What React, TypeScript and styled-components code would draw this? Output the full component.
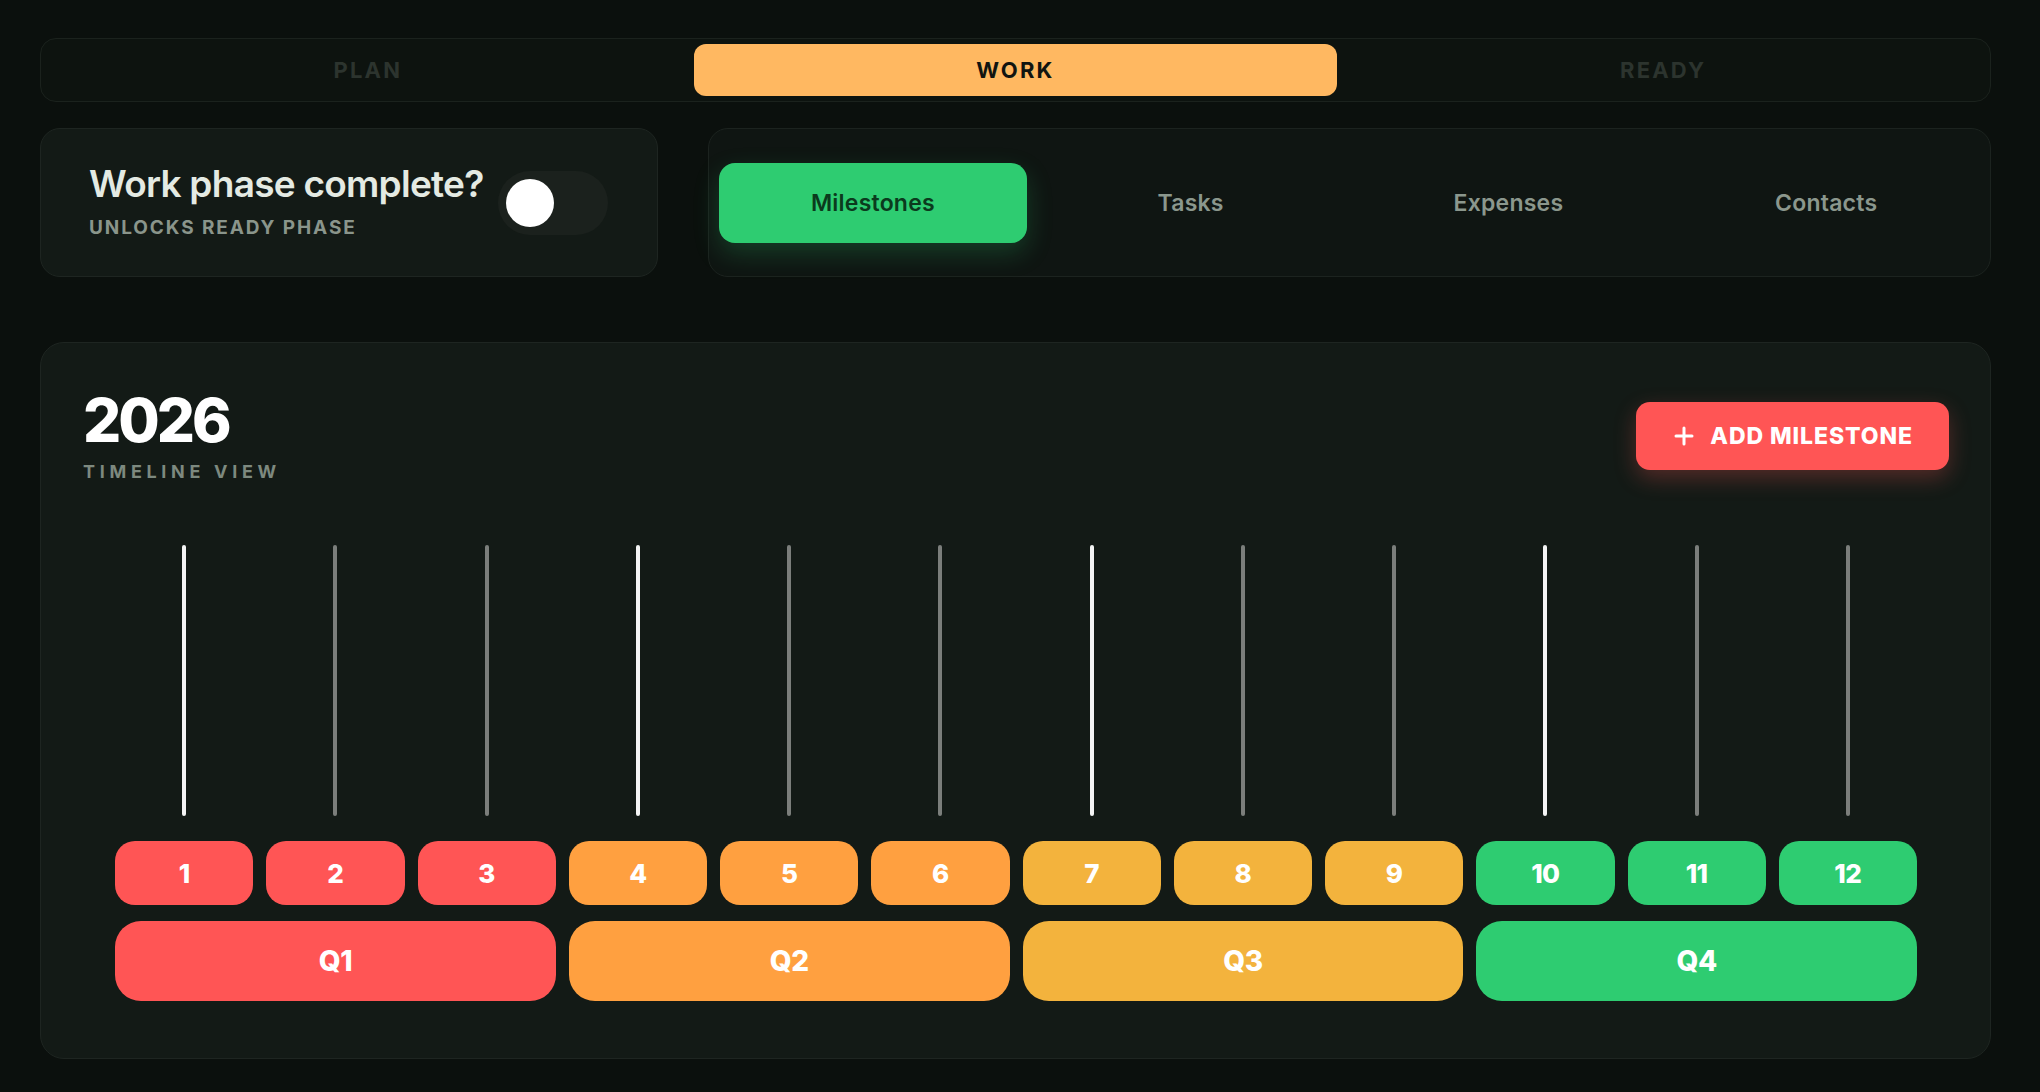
import { useState } from "react";
import styled, { createGlobalStyle } from "styled-components";

const GlobalStyle = createGlobalStyle`
  body {
    margin: 0;
    background: #0b100d;
    font-family: Inter, "Noto Sans", sans-serif;
  }
`;

const Page = styled.div`
  padding: 38px 49px 0 40px;
  box-sizing: border-box;
  min-height: 1092px;
  display: flex;
  flex-direction: column;
`;

// Phase switch
const PhaseBar = styled.div`
  display: grid;
  grid-template-columns: repeat(3, 1fr);
  gap: 4px;
  padding: 5px;
  border: 1px solid #1b221d;
  border-radius: 16px;
  background: #0d130f;
`;

const PhaseTab = styled.button<{ $active?: boolean }>`
  height: 52px;
  border: none;
  border-radius: 12px;
  background: ${(p) => (p.$active ? "#ffb861" : "transparent")};
  color: ${(p) => (p.$active ? "#111410" : "#2c342e")};
  font-family: inherit;
  font-size: 22px;
  font-weight: 700;
  letter-spacing: 0.1em;
  cursor: pointer;
`;

const TopRow = styled.div`
  display: grid;
  grid-template-columns: 618px 1fr;
  gap: 50px;
  margin-top: 26px;
  height: 149px;
`;

const StatusCard = styled.div`
  display: flex;
  align-items: center;
  justify-content: space-between;
  padding: 0 49px 0 48px;
  background: #131a16;
  border: 1px solid #1e2521;
  border-radius: 20px;
`;

const StatusText = styled.div`
  display: flex;
  flex-direction: column;
  gap: 11px;
  margin-top: -2px;
`;

const StatusTitle = styled.div`
  color: #e4eae3;
  font-size: 37px;
  font-weight: 600;
  letter-spacing: -0.02em;
  line-height: 1.1;
`;

const StatusSub = styled.div`
  color: #8a958b;
  font-size: 19px;
  font-weight: 700;
  letter-spacing: 0.1em;
`;

const ToggleTrack = styled.div<{ $on?: boolean }>`
  flex-shrink: 0;
  width: 110px;
  height: 64px;
  border-radius: 32px;
  background: ${(p) => (p.$on ? "#2ecc71" : "#1b211d")};
  padding: 8px;
  box-sizing: border-box;
  display: flex;
  justify-content: ${(p) => (p.$on ? "flex-end" : "flex-start")};
  cursor: pointer;
`;

const ToggleKnob = styled.div`
  width: 48px;
  height: 48px;
  border-radius: 50%;
  background: #ffffff;
`;

const TabsCard = styled.div`
  display: grid;
  grid-template-columns: repeat(4, 1fr);
  gap: 10px;
  align-items: center;
  padding: 0 10px;
  background: #0f1512;
  border: 1px solid #1c231f;
  border-radius: 20px;
`;

const SectionTab = styled.button<{ $active?: boolean }>`
  height: 80px;
  border: none;
  border-radius: 16px;
  background: ${(p) => (p.$active ? "#2ecc71" : "transparent")};
  box-shadow: ${(p) =>
    p.$active ? "0 10px 26px rgba(46, 204, 113, 0.22)" : "none"};
  color: ${(p) => (p.$active ? "#0b3a1d" : "#8b978d")};
  font-family: inherit;
  font-size: 23px;
  font-weight: 600;
  letter-spacing: 0.01em;
  cursor: pointer;
`;

// Timeline
const TimelineCard = styled.div`
  margin-top: 65px;
  padding: 47px 41px 57px 42px;
  background: #131a16;
  border: 1px solid #1e2521;
  border-radius: 24px;
`;

const Header = styled.div`
  display: flex;
  justify-content: space-between;
  align-items: center;
`;

const Year = styled.div`
  color: #ffffff;
  font-size: 60px;
  font-weight: 800;
  line-height: 1;
  letter-spacing: -0.05em;
`;

const YearSub = styled.div`
  margin-top: 13px;
  color: #7d897f;
  font-size: 18px;
  font-weight: 700;
  line-height: 1;
  letter-spacing: 0.26em;
`;

const AddButton = styled.button`
  display: flex;
  align-items: center;
  gap: 16px;
  height: 68px;
  padding: 0 36px 0 38px;
  border: none;
  border-radius: 14px;
  background: #ff5555;
  box-shadow: 0 8px 22px rgba(255, 85, 85, 0.28);
  color: #ffffff;
  font-family: inherit;
  font-size: 23px;
  font-weight: 800;
  letter-spacing: 0.04em;
  cursor: pointer;
`;

const Timeline = styled.div`
  margin-top: 64px;
  padding: 0 32px;
`;

const MonthGrid = styled.div<{ $gapTop?: number }>`
  display: grid;
  grid-template-columns: repeat(12, 1fr);
  column-gap: 13px;
  margin-top: ${(p) => p.$gapTop ?? 0}px;
`;

const TickCell = styled.div`
  height: 271px;
  display: flex;
  justify-content: center;
`;

const Tick = styled.div<{ $major?: boolean }>`
  width: 4px;
  height: 100%;
  border-radius: 2px;
  background: ${(p) => (p.$major ? "#f4f4f4" : "#7b7e7b")};
`;

const MonthPill = styled.div<{ $color: string }>`
  height: 64px;
  border-radius: 20px;
  background: ${(p) => p.$color};
  color: #ffffff;
  font-size: 26px;
  font-weight: 800;
  letter-spacing: -0.02em;
  display: flex;
  align-items: center;
  justify-content: center;
`;

const QuarterPill = styled.div<{ $color: string }>`
  grid-column: span 3;
  height: 80px;
  border-radius: 26px;
  background: ${(p) => p.$color};
  color: #ffffff;
  font-size: 28px;
  font-weight: 800;
  letter-spacing: -0.02em;
  display: flex;
  align-items: center;
  justify-content: center;
`;

const quarterColors = ["#ff5555", "#ffa040", "#f3b33d", "#2ecc71"];
const months = Array.from({ length: 12 }, (_, i) => i + 1);
const phases = ["PLAN", "WORK", "READY"];
const tabs = ["Milestones", "Tasks", "Expenses", "Contacts"];

const PlusIcon = () => (
  <svg width="20" height="20" viewBox="0 0 20 20" fill="none">
    <path
      d="M10 2v16M2 10h16"
      stroke="#fff"
      strokeWidth="3"
      strokeLinecap="round"
    />
  </svg>
);

const App = () => {
  const [phase, setPhase] = useState("WORK");
  const [tab, setTab] = useState("Milestones");
  const [done, setDone] = useState(false);

  return (
    <>
      <GlobalStyle />
      <Page>
        <PhaseBar>
          {phases.map((p) => (
            <PhaseTab key={p} $active={p === phase} onClick={() => setPhase(p)}>
              {p}
            </PhaseTab>
          ))}
        </PhaseBar>

        <TopRow>
          <StatusCard>
            <StatusText>
              <StatusTitle>Work phase complete?</StatusTitle>
              <StatusSub>UNLOCKS READY PHASE</StatusSub>
            </StatusText>
            <ToggleTrack $on={done} onClick={() => setDone((v) => !v)}>
              <ToggleKnob />
            </ToggleTrack>
          </StatusCard>

          <TabsCard>
            {tabs.map((t) => (
              <SectionTab key={t} $active={t === tab} onClick={() => setTab(t)}>
                {t}
              </SectionTab>
            ))}
          </TabsCard>
        </TopRow>

        <TimelineCard>
          <Header>
            <div>
              <Year>2026</Year>
              <YearSub>TIMELINE VIEW</YearSub>
            </div>
            <AddButton>
              <PlusIcon />
              ADD MILESTONE
            </AddButton>
          </Header>

          <Timeline>
            <MonthGrid>
              {months.map((m) => (
                <TickCell key={m}>
                  <Tick $major={(m - 1) % 3 === 0} />
                </TickCell>
              ))}
            </MonthGrid>
            <MonthGrid $gapTop={25}>
              {months.map((m) => (
                <MonthPill key={m} $color={quarterColors[Math.floor((m - 1) / 3)]}>
                  {m}
                </MonthPill>
              ))}
            </MonthGrid>
            <MonthGrid $gapTop={16}>
              {quarterColors.map((c, i) => (
                <QuarterPill key={c} $color={c}>
                  Q{i + 1}
                </QuarterPill>
              ))}
            </MonthGrid>
          </Timeline>
        </TimelineCard>
      </Page>
    </>
  );
};

export default App;
